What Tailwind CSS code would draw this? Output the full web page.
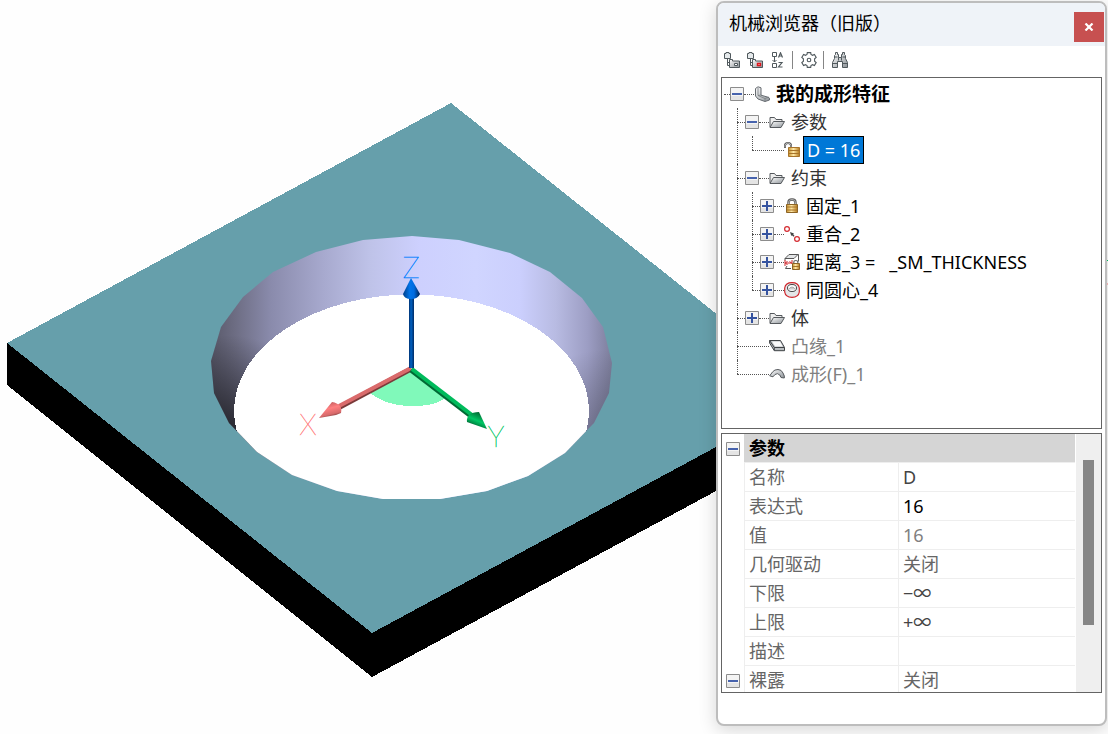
<!DOCTYPE html>
<html lang="zh-CN">
<head>
    <meta charset="UTF-8">
    <meta name="viewport" content="width=device-width, initial-scale=1.0">
    <title>机械浏览器</title>
    <script src="https://cdn.jsdelivr.net/npm/@tailwindcss/browser@4"></script>
</head>
<body class="bg-[#fefefe] font-['Noto_Sans','Noto_Sans_CJK_SC',sans-serif] text-[18px] leading-7 text-black">

    <!-- Shared icons -->
    <svg class="absolute size-0" aria-hidden="true">
        <defs>
            <linearGradient id="metal" x1="0" y1="0" x2="1" y2="1">
                <stop offset="0" stop-color="#fff"/><stop offset="1" stop-color="#8d9398"/>
            </linearGradient>
            <linearGradient id="gold" x1="0" x2="1">
                <stop offset="0" stop-color="#c8922e"/><stop offset=".45" stop-color="#ffe9a8"/><stop offset="1" stop-color="#b67a1c"/>
            </linearGradient>
        </defs>
        <symbol id="i-folder" viewBox="0 0 16 16">
            <path d="M1 13V3.500h4.500l1.500 2h6V7.500" fill="#eee" stroke="#55595d"/>
            <path d="M1 13.500 4.500 7.500h11L12 13.500z" fill="url(#metal)" stroke="#55595d"/>
        </symbol>
        <symbol id="i-part" viewBox="0 0 16 16">
            <path d="M1.500 2.500 4 .8l3 1v7.400l7 2 1.500 1v1.800L11 15.500 4 13 1.500 10z" fill="url(#metal)" stroke="#666b70"/>
            <path d="M4 2v7.500l7 3 4-1.500M11 12.500v3M4 9.500 7 9" fill="none" stroke="#777c80" stroke-width=".8"/>
        </symbol>
        <symbol id="i-unlock" viewBox="0 0 16 16">
            <path d="M1 6V3.500Q1 1 4 1t3 2.500V7" fill="none" stroke="#555" stroke-width="2"/>
            <path d="M1 5.500V3.500Q1.500 1 4 1t3 2.500V5" fill="none" stroke="#ccc" stroke-width=".8"/>
            <path d="M4.500 5.500h11v9h-11z" fill="url(#gold)" stroke="#a8742a"/>
            <path d="M5 8.500h10M5 11.500h10" stroke="#a8742a"/>
        </symbol>
        <symbol id="i-lock" viewBox="0 0 16 16">
            <path d="M4.500 7V4.500Q4.500 1.500 8 1.500t3.500 3V7" fill="none" stroke="#555" stroke-width="2.400"/>
            <path d="M4.500 7V4.500Q4.500 1.500 8 1.500t3.500 3V7" fill="none" stroke="#ccc" stroke-width=".8"/>
            <path d="M2.500 6.500h11v8h-11z" fill="url(#gold)" stroke="#8c6425"/>
            <path d="M3 9h10M3 12h10" stroke="#a8742a"/>
        </symbol>
        <symbol id="i-coincide" viewBox="0 0 16 16">
            <circle cx="3" cy="3" r="2.400" fill="#fff" stroke="#d42a30" stroke-width="1.200"/>
            <circle cx="13" cy="13" r="2.400" fill="#fff" stroke="#d42a30" stroke-width="1.200"/>
            <path d="m6 6 4 1.500-.8.700 1.300 1.600-1 .9L8 9.200l-.7.800z" fill="#444"/>
        </symbol>
        <symbol id="i-distance" viewBox="0 0 16 16">
            <path d="M2 4 5 1h8l-3 3z" fill="#e3e5e7"/>
            <path d="m1 4.500 4-4h9.500v7M1 4.500h9l4-4M1 4.500v2M3 12l-1.500 2.500H7" fill="none" stroke="#555"/>
            <path d="M1 6v6M8 6v4M1 9h7M3.500 7 1.500 9l2 2M5.500 7.500 7.500 9" fill="none" stroke="#cf262c"/>
            <path d="M9.800 10V8q0-1.500 2-1.500t2 1.500v2" fill="none" stroke="#666" stroke-width="1.200"/>
            <path d="M8.500 9.500h7v6h-7z" fill="url(#gold)" stroke="#8c6425"/>
            <path d="M9 12.500h6" stroke="#a8742a"/>
        </symbol>
        <symbol id="i-concentric" viewBox="0 0 16 16">
            <path d="M.7 6Q1.500.7 8 .7t7.300 5.300v4q-.8 5.300-7.300 5.300T.7 10z" fill="#e4e6e8" stroke="#cf262c" stroke-width="1.200"/>
            <ellipse cx="8" cy="6" rx="4.500" ry="3.500" fill="#fff" stroke="#444"/>
            <path d="M4.500 7.500Q6 5 8 5t3.500 2.500" fill="#ccc" stroke="#999" stroke-width=".8"/>
        </symbol>
        <symbol id="i-flange" viewBox="0 0 16 16">
            <path d="M.6 2.500h10.900l4 7v3.200H5.300L.6 5z" fill="#b9bdc0" stroke="#3f4346"/>
            <path d="M.6 2.500 5.300 9.500h10.200M5.300 9.500v3" fill="none" stroke="#3f4346"/>
            <path d="M3 3.500h8l2.800 5H6.200z" fill="#fafafa"/>
        </symbol>
        <symbol id="i-form" viewBox="0 0 16 16">
            <path d="m.7 9.800 3-4Q5.500 3.500 9 3.500t5 3.500l1.300 3v2L12 11.500 10.800 9Q8.500 6.500 6 8.500l-2 2.300z" fill="url(#metal)" stroke="#55595d"/>
        </symbol>
        <symbol id="i-minus" viewBox="0 0 14 14">
            <path d="M.5.5h13v13H.5z" fill="#f4f4f4" stroke="#8c8c8c"/><path d="M1 9h12v4H1z" fill="#e4e4e4"/>
            <path d="M2 7h10" stroke="#4763ad" stroke-width="2"/>
        </symbol>
        <symbol id="i-plus" viewBox="0 0 14 14">
            <path d="M.5.5h13v13H.5z" fill="#f4f4f4" stroke="#8c8c8c"/><path d="M1 9h12v4H1z" fill="#e4e4e4"/>
            <path d="M2 7h10M7 2v10" stroke="#35539f" stroke-width="2"/>
        </symbol>
        <symbol id="i-nodes" viewBox="0 0 16 16">
            <path d="M3.500 7v6.500h2M3.500 10.500h2" fill="none" stroke="#50595d"/>
            <path d="M.5 6.500V1.500h1.500v-1h3v1h1.500v5z" fill="#e6eaec" stroke="#50595d"/>
            <path d="M5.500 15.500V7.500h3v1.500h7v6.500z" fill="url(#metal)" stroke="#50595d"/>
        </symbol>
    </svg>

    <main class="relative flex min-h-screen items-stretch justify-end overflow-hidden pt-px pr-px pb-2">

        <!-- Model view -->
        <svg class="absolute inset-0 size-full" role="img" aria-label="带圆孔的钣金模型">
            <defs>
                <linearGradient id="wall" gradientUnits="userSpaceOnUse" x1="211" y1="0" x2="612" y2="0">
                    <stop offset="0" stop-color="#59596a"/>
                    <stop offset=".06" stop-color="#6d6d83"/>
                    <stop offset=".15" stop-color="#8a8bac"/>
                    <stop offset=".28" stop-color="#a7a9ce"/>
                    <stop offset=".4" stop-color="#bfc3e9"/>
                    <stop offset=".52" stop-color="#cdd0fe"/>
                    <stop offset=".66" stop-color="#d0d5ff"/>
                    <stop offset=".77" stop-color="#cbcffd"/>
                    <stop offset=".86" stop-color="#b8bbe2"/>
                    <stop offset=".94" stop-color="#9c9dc3"/>
                    <stop offset="1" stop-color="#7d7e9c"/>
                </linearGradient>
                <radialGradient id="shadeLeft" gradientUnits="userSpaceOnUse" cx="228" cy="440" r="105">
                    <stop offset="0" stop-opacity=".7"/><stop offset="1" stop-opacity="0"/>
                </radialGradient>
                <radialGradient id="shadeRight" gradientUnits="userSpaceOnUse" cx="602" cy="440" r="90">
                    <stop offset="0" stop-opacity=".3"/><stop offset="1" stop-opacity="0"/>
                </radialGradient>
                <linearGradient id="blueCone"><stop offset="0" stop-color="#003f88"/><stop offset=".4" stop-color="#0074ea"/><stop offset=".65" stop-color="#006be0"/><stop offset="1" stop-color="#001f4a"/></linearGradient>
                <linearGradient id="blueShaft"><stop offset="0" stop-color="#003070"/><stop offset=".4" stop-color="#0062c4"/><stop offset="1" stop-color="#002c66"/></linearGradient>
                <linearGradient id="redCone" x1=".3" y1="0" x2=".65" y2="1"><stop offset="0" stop-color="#b95759"/><stop offset=".4" stop-color="#ff7f80"/><stop offset=".75" stop-color="#d86a6b"/><stop offset="1" stop-color="#4f2424"/></linearGradient>
                <linearGradient id="greenCone" x1=".7" y1=".1" x2=".3" y2=".9"><stop offset="0" stop-color="#006d35"/><stop offset=".5" stop-color="#00c864"/><stop offset=".75" stop-color="#009148"/><stop offset="1" stop-color="#002c15"/></linearGradient>
                <clipPath id="hole">
                    <path d="M412 236 459 240 510 253 550 272 582 298 603 327 612 363 609 393 594 423 565 453 528 476 487 491 440 499H383L337 491 292 475 257 452 229 423 214 393 211 361 221 327 243 297 273 272 316 252 363 240z"/>
                </clipPath>
            </defs>
            <g shape-rendering="crispEdges">
                <path d="M7 343V385L372 677 816 437V393z" fill="#000"/>
                <path d="M451 103 816 393 372 633 7 343z" fill="#669fab"/>
                <g clip-path="url(#hole)">
                    <path d="M205 230h412v275H205z" fill="url(#wall)"/>
                    <path d="M205 230h412v275H205z" fill="url(#shadeLeft)"/>
                    <path d="M205 230h412v275H205z" fill="url(#shadeRight)"/>
                    <ellipse cx="411.500" cy="411" rx="177.500" ry="116.500" fill="#fff"/>
                </g>
                <path d="M411 368 370 393Q387 406 412 406T446 397z" fill="#80f9ba"/>
            </g>
            <!-- Axes -->
            <path d="M411 369 340 407" stroke="#7a3a3a" stroke-width="5"/>
            <path d="M411 368 339 406" stroke="#da6b6c" stroke-width="4"/>
            <path d="M319 418 332 402Q343 404 341 413L336 415z" fill="url(#redCone)"/>
            <path d="M411 370 471 416" stroke="#006a35" stroke-width="5"/>
            <path d="M412 369 472 415" stroke="#00bb5c" stroke-width="4"/>
            <path d="M487 429 467 422Q466 412 479 412z" fill="url(#greenCone)"/>
            <path d="M409 298h5v70h-5z" fill="url(#blueShaft)"/>
            <path d="M411 278 403 294Q404 299 411 299T420 294z" fill="url(#blueCone)"/>
            <g class="font-[Lato] text-[29px] font-thin" text-anchor="middle">
                <text x="411" y="278" fill="#007fff" stroke="#007fff" stroke-width=".4">Z</text>
                <text x="308" y="435" fill="#ff7f7f" stroke="#ff7f7f" stroke-width=".4">X</text>
                <text x="496" y="447" fill="#00c864" stroke="#00c864" stroke-width=".4">Y</text>
            </g>
            <path d="m1105 258 3 3" stroke="#00c864"/>
            <path d="M1105 284h3" stroke="#ff7f7f"/>
        </svg>

        <!-- Browser palette -->
        <aside class="relative flex w-[391px] flex-col overflow-hidden rounded-lg border-2 border-[#bdbdbd] bg-white shadow-[0_4px_18px_rgba(0,0,0,0.16)]">
            <header class="flex h-[43px] shrink-0 items-start bg-[#eff3f8] pl-[11px]">
                <h1 class="flex-1 pt-1.5">机械浏览器（旧版）</h1>
                <button type="button" aria-label="关闭" class="mt-[9px] mr-px flex size-[30px] items-center justify-center bg-[#c75050]">
                    <svg class="h-2 w-[10px]" viewBox="0 0 10 8"><path d="m1.500.5 7 7m0-7-7 7" stroke="#fff" stroke-width="2.200"/></svg>
                </button>
            </header>

            <div class="flex h-[31px] shrink-0 items-center pb-1 pl-1.5">
                <button type="button" aria-label="展开" class="mr-[7px]"><svg class="size-4"><use href="#i-nodes"/><path d="M10.500 11.500h3v2h-3z" fill="#fff" stroke="#50595d"/></svg></button>
                <button type="button" aria-label="折叠" class="mr-[7px]"><svg class="size-4"><use href="#i-nodes"/><path d="M10.500 11.500h3v2h-3z" fill="#fff" stroke="#e0151b" stroke-width="1.400"/></svg></button>
                <button type="button" aria-label="排序" class="mr-1.5">
                    <svg class="size-4" viewBox="0 0 16 16" fill="none" stroke="#50595d">
                        <path d="M2.500.5h4v4h-4zM2.500 11.500h4v4h-4zM4.500 5v5M2.500 8l2 2 2-2"/>
                        <path d="M8.500 5.500 10.500.8l2 4.700M9 4h3M8.500 10.500h3.500l-3.500 4.500h4" stroke-width="1.200"/>
                    </svg>
                </button>
                <span class="mr-2 h-[18px] w-px bg-[#858585]"></span>
                <button type="button" aria-label="设置" class="mr-1.5">
                    <svg class="size-4" viewBox="0 0 16 16" fill="none" stroke="#50595d" stroke-width="1.100">
                        <path d="M6 2.500 6.300.6h3.400l.3 1.900 1.500.8 1.900-.8 1.800 2.900-1.600 1.400v2.400l1.600 1.400-1.800 2.900-1.900-.8-1.500.8-.3 1.900H6.300L6 13.500l-1.500-.8-1.900.8L.8 10.600l1.600-1.400V6.800L.8 5.400l1.800-2.900 1.900.8z"/>
                        <circle cx="8" cy="8" r="1.800"/>
                    </svg>
                </button>
                <span class="mr-2 h-[18px] w-px bg-[#858585]"></span>
                <button type="button" aria-label="查找">
                    <svg class="size-4" viewBox="0 0 16 16" fill="url(#metal)" stroke="#50595d">
                        <path d="M3.500.5h2v2h1v3h3v-3h1v-2h2v2l1 1v3l2 4v5h-5v-6h-5v6h-5v-5l2-4v-3l1-1z"/>
                        <path d="M.5 11.500h5M10.500 11.500h5M6.500 5.500v3M9.500 5.500v3M2.500 5h3M10.500 5h3" fill="none"/>
                    </svg>
                </button>
            </div>

            <!-- Feature tree -->
            <nav class="mx-[3px] flex-1 overflow-hidden border border-[#646464] pt-0.5 whitespace-nowrap">
                <ul>
                    <li>
                        <div class="flex h-7 items-center">
                            <span class="ml-0.5 w-1.5 border-t border-dotted border-[#555]"></span>
                            <button type="button" aria-label="折叠"><svg class="size-3.5"><use href="#i-minus"/></svg></button>
                            <span class="w-2.5 border-t border-dotted border-[#555]"></span>
                            <svg class="mr-1.5 size-4"><use href="#i-part"/></svg>
                            <span class="text-[19px] font-bold">我的成形特征</span>
                        </div>
                        <ul class="ml-[15px]">
                            <li class="relative before:absolute before:top-0 before:left-0 before:h-full before:border-l before:border-dotted before:border-[#555]">
                                <div class="flex h-7 items-center">
                                    <span class="w-2 border-t border-dotted border-[#555]"></span>
                                    <button type="button" aria-label="折叠"><svg class="size-3.5"><use href="#i-minus"/></svg></button>
                                    <span class="w-2.5 border-t border-dotted border-[#555]"></span>
                                    <svg class="mr-1.5 size-4"><use href="#i-folder"/></svg>
                                    <span class="text-[#333]">参数</span>
                                </div>
                                <ul class="ml-[15px]">
                                    <li class="relative before:absolute before:top-0 before:left-0 before:h-3.5 before:border-l before:border-dotted before:border-[#555]">
                                        <div class="flex h-7 items-center">
                                            <span class="w-8 border-t border-dotted border-[#555]"></span>
                                            <svg class="mr-[3px] size-4"><use href="#i-unlock"/></svg>
                                            <span class="h-7 border border-black bg-[#0078d7] px-[3px] leading-[26px] text-white">D = 16</span>
                                        </div>
                                    </li>
                                </ul>
                            </li>
                            <li class="relative before:absolute before:top-0 before:left-0 before:h-full before:border-l before:border-dotted before:border-[#555]">
                                <div class="flex h-7 items-center">
                                    <span class="w-2 border-t border-dotted border-[#555]"></span>
                                    <button type="button" aria-label="折叠"><svg class="size-3.5"><use href="#i-minus"/></svg></button>
                                    <span class="w-2.5 border-t border-dotted border-[#555]"></span>
                                    <svg class="mr-1.5 size-4"><use href="#i-folder"/></svg>
                                    <span class="text-[#333]">约束</span>
                                </div>
                                <ul class="ml-[15px]">
                                    <li class="relative before:absolute before:top-0 before:left-0 before:h-full before:border-l before:border-dotted before:border-[#555]">
                                        <div class="flex h-7 items-center">
                                            <span class="w-2 border-t border-dotted border-[#555]"></span>
                                            <button type="button" aria-label="展开"><svg class="size-3.5"><use href="#i-plus"/></svg></button>
                                            <span class="w-2.5 border-t border-dotted border-[#555]"></span>
                                            <svg class="mr-1.5 size-4"><use href="#i-lock"/></svg>
                                            <span>固定_1</span>
                                        </div>
                                    </li>
                                    <li class="relative before:absolute before:top-0 before:left-0 before:h-full before:border-l before:border-dotted before:border-[#555]">
                                        <div class="flex h-7 items-center">
                                            <span class="w-2 border-t border-dotted border-[#555]"></span>
                                            <button type="button" aria-label="展开"><svg class="size-3.5"><use href="#i-plus"/></svg></button>
                                            <span class="w-2.5 border-t border-dotted border-[#555]"></span>
                                            <svg class="mr-1.5 size-4"><use href="#i-coincide"/></svg>
                                            <span>重合_2</span>
                                        </div>
                                    </li>
                                    <li class="relative before:absolute before:top-0 before:left-0 before:h-full before:border-l before:border-dotted before:border-[#555]">
                                        <div class="flex h-7 items-center">
                                            <span class="w-2 border-t border-dotted border-[#555]"></span>
                                            <button type="button" aria-label="展开"><svg class="size-3.5"><use href="#i-plus"/></svg></button>
                                            <span class="w-2.5 border-t border-dotted border-[#555]"></span>
                                            <svg class="mr-1.5 size-4"><use href="#i-distance"/></svg>
                                            <span>距离_3 =&nbsp;&nbsp; _SM_THICKNESS</span>
                                        </div>
                                    </li>
                                    <li class="relative before:absolute before:top-0 before:left-0 before:h-3.5 before:border-l before:border-dotted before:border-[#555]">
                                        <div class="flex h-7 items-center">
                                            <span class="w-2 border-t border-dotted border-[#555]"></span>
                                            <button type="button" aria-label="展开"><svg class="size-3.5"><use href="#i-plus"/></svg></button>
                                            <span class="w-2.5 border-t border-dotted border-[#555]"></span>
                                            <svg class="mr-1.5 size-4"><use href="#i-concentric"/></svg>
                                            <span>同圆心_4</span>
                                        </div>
                                    </li>
                                </ul>
                            </li>
                            <li class="relative before:absolute before:top-0 before:left-0 before:h-full before:border-l before:border-dotted before:border-[#555]">
                                <div class="flex h-7 items-center">
                                    <span class="w-2 border-t border-dotted border-[#555]"></span>
                                    <button type="button" aria-label="展开"><svg class="size-3.5"><use href="#i-plus"/></svg></button>
                                    <span class="w-2.5 border-t border-dotted border-[#555]"></span>
                                    <svg class="mr-1.5 size-4"><use href="#i-folder"/></svg>
                                    <span class="text-[#333]">体</span>
                                </div>
                            </li>
                            <li class="relative before:absolute before:top-0 before:left-0 before:h-full before:border-l before:border-dotted before:border-[#555]">
                                <div class="flex h-7 items-center">
                                    <span class="w-8 border-t border-dotted border-[#555]"></span>
                                    <svg class="mr-1.5 size-4"><use href="#i-flange"/></svg>
                                    <span class="text-[#808080]">凸缘_1</span>
                                </div>
                            </li>
                            <li class="relative before:absolute before:top-0 before:left-0 before:h-3.5 before:border-l before:border-dotted before:border-[#555]">
                                <div class="flex h-7 items-center">
                                    <span class="w-8 border-t border-dotted border-[#555]"></span>
                                    <svg class="mr-1.5 size-4"><use href="#i-form"/></svg>
                                    <span class="text-[#808080]">成形(F)_1</span>
                                </div>
                            </li>
                        </ul>
                    </li>
                </ul>
            </nav>

            <!-- Property grid -->
            <section class="mx-[3px] mt-1 mb-[31px] flex h-[260px] shrink-0 items-start overflow-hidden border border-[#646464]">
                <table class="mr-px flex-1 table-fixed border-separate border-spacing-0 text-left text-[#666]">
                    <colgroup><col class="w-[22px]"><col class="w-[155px]"><col></colgroup>
                    <tbody>
                        <tr class="h-[29px]">
                            <td class="p-0"><button type="button" aria-label="折叠" class="ml-1 block"><svg class="size-3.5"><use href="#i-minus"/></svg></button></td>
                            <th colspan="2" class="border-b border-[#eee] bg-[#d5d5d5] p-0 pl-[5px] font-bold text-black">参数</th>
                        </tr>
                        <tr class="h-[29px]"><td class="p-0"></td><th class="border-r border-b border-l border-[#eee] p-0 pl-1 font-normal">名称</th><td class="border-b border-[#eee] p-0 pl-1 text-[#444]">D</td></tr>
                        <tr class="h-[29px]"><td class="p-0"></td><th class="border-r border-b border-l border-[#eee] p-0 pl-1 font-normal">表达式</th><td class="border-b border-[#eee] p-0 pl-1 text-black">16</td></tr>
                        <tr class="h-[29px]"><td class="p-0"></td><th class="border-r border-b border-l border-[#eee] p-0 pl-1 font-normal">值</th><td class="border-b border-[#eee] p-0 pl-1 text-[#808080]">16</td></tr>
                        <tr class="h-[29px]"><td class="p-0"></td><th class="border-r border-b border-l border-[#eee] p-0 pl-1 font-normal">几何驱动</th><td class="border-b border-[#eee] p-0 pl-1">关闭</td></tr>
                        <tr class="h-[29px]"><td class="p-0"></td><th class="border-r border-b border-l border-[#eee] p-0 pl-1 font-normal">下限</th><td class="border-b border-[#eee] p-0 pl-1 text-[#444]">−∞</td></tr>
                        <tr class="h-[29px]"><td class="p-0"></td><th class="border-r border-b border-l border-[#eee] p-0 pl-1 font-normal">上限</th><td class="border-b border-[#eee] p-0 pl-1 text-[#444]">+∞</td></tr>
                        <tr class="h-[29px]"><td class="p-0"></td><th class="border-r border-b border-l border-[#eee] p-0 pl-1 font-normal">描述</th><td class="border-b border-[#eee] p-0 pl-1"></td></tr>
                        <tr class="h-[29px]">
                            <td class="p-0"><button type="button" aria-label="折叠" class="ml-1 block"><svg class="size-3.5"><use href="#i-minus"/></svg></button></td>
                            <th class="border-r border-b border-l border-[#eee] p-0 pl-1 font-normal">裸露</th><td class="border-b border-[#eee] p-0 pl-1">关闭</td>
                        </tr>
                    </tbody>
                </table>
                <div class="h-full w-[25px] bg-[#efefef] pt-[26px] pl-[7px]">
                    <div class="h-[165px] w-[11px] bg-[#868686]"></div>
                </div>
            </section>
        </aside>
    </main>
</body>
</html>
